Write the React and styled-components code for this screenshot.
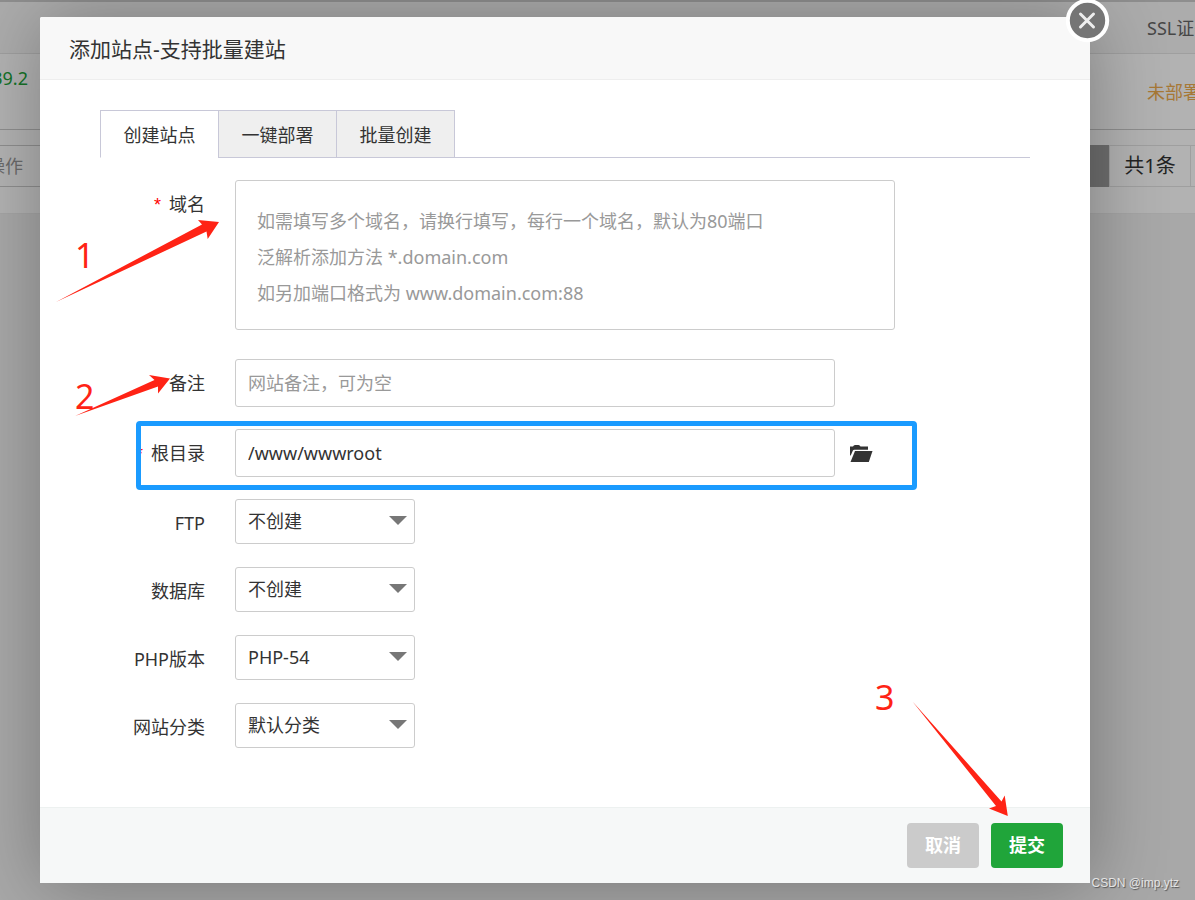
import React from "react";
import styled, { createGlobalStyle } from "styled-components";

const GlobalStyle = createGlobalStyle`
  *, *::before, *::after { box-sizing: border-box; }
  body {
    margin: 0;
    background: #f1f1f1;
    color: #333;
    font-family: "Noto Sans", "Noto Sans CJK SC", sans-serif;
    font-size: 18px;
    line-height: 24px;
  }
  button, input, select, textarea { font: inherit; color: inherit; }
`;

const Screen = styled.div`
  display: grid;
  min-height: 100vh;
  overflow: hidden;
  position: relative;

  > * { grid-area: 1 / 1; min-width: 0; }
`;

/* Site list behind the dialog */
const Backdrop = styled.div`
  background: #f1f1f1;
`;

const Panel = styled.section`
  background: #fff;
  padding-bottom: 26px;
  border-bottom: 1px solid #ececec;
`;

const ListRow = styled.div`
  display: flex;
  justify-content: space-between;
  align-items: center;
  height: ${(p) => p.$height}px;
  background: ${(p) => (p.$head ? "#f6f6f6" : "#fff")};
  border-bottom: 1px solid ${(p) => (p.$head ? "#e4e4e4" : "#ccc")};
  border-top: ${(p) => (p.$head ? "2px solid #ccc" : "0")};
`;

const EdgeText = styled.span`
  display: flex;
  align-self: ${(p) => (p.$end ? "flex-start" : "center")};
  justify-content: ${(p) => (p.$end ? "flex-end" : "flex-start")};
  width: ${(p) => (p.$end ? 28 : 48)}px;
  padding-top: ${(p) => (p.$end ? 12 : 0)}px;
  overflow: hidden;
  white-space: nowrap;
  color: ${(p) => p.$color};
`;

const Pager = styled.div`
  display: flex;
  justify-content: space-between;
  height: 42px;
  margin-top: 15px;
  line-height: 40px;
`;

const BatchCell = styled.div`
  display: flex;
  justify-content: flex-end;
  width: 100px;
  margin-left: -60px;
  padding-right: 17px;
  border: solid #ccc;
  border-width: 1px 0;
  color: #999;
`;

const PageCells = styled.div`
  display: flex;
  font-size: 20px;
`;

const CurrentPage = styled.span`
  width: 40px;
  background: #a0a0a0;
`;

const PageCell = styled.span`
  width: ${(p) => p.$width}px;
  border: 1px solid #e4e4e4;
  border-right: 0;
  text-align: center;
`;

const Scrim = styled.div`
  background: rgba(0, 0, 0, 0.3);
`;

/* Dialog */
const Dialog = styled.section`
  position: relative;
  align-self: start;
  margin: 17px 105px 17px 40px;
  background: #fff;
  border-radius: 2px;
  box-shadow: 2px 2px 75px rgba(0, 0, 0, 0.3);
`;

const Title = styled.h1`
  margin: 0;
  padding: 2px 29px 0;
  border-bottom: 1px solid #eee;
  border-radius: 2px 2px 0 0;
  background: #f8f8f8;
  font-size: 21px;
  font-weight: 400;
  line-height: 60px;
`;

const CloseButton = styled.button`
  position: absolute;
  top: -18px;
  right: -20px;
  width: 44px;
  height: 44px;
  padding: 0;
  border: 0;
  background: none;

  svg { display: block; }
`;

const Content = styled.form`
  padding: 30px 60px 0;
`;

const Tabs = styled.div`
  display: flex;
  height: 48px;
  border-bottom: 1px solid #c8c8d8;
`;

const Tab = styled.button`
  width: 119px;
  height: 48px;
  padding: 2px 0 0;
  border: 1px solid #c8c8d8;
  border-bottom-color: ${(p) => (p.$active ? "#fff" : "#c8c8d8")};
  background: ${(p) => (p.$active ? "#fff" : "#efefef")};
  line-height: 24px;

  & + & { margin-left: -1px; }
`;

const Fields = styled.div`
  display: flex;
  flex-direction: column;
  gap: ${(p) => p.$gap}px;
`;

const Row = styled.div`
  display: flex;
  position: relative;
  min-height: 48px;
`;

const Label = styled.label`
  flex: 0 0 105px;
  margin-right: 30px;
  text-align: right;
  line-height: 48px;
  white-space: nowrap;
`;

const Required = styled.span`
  margin-right: 8px;
  color: #f00;
  font-family: "Liberation Sans", sans-serif;
  line-height: 24px;
`;

const TextInput = styled.input`
  flex: 0 1 600px;
  min-width: 0;
  height: 48px;
  padding: 0 12px;
  border: 1px solid #ccc;
  border-radius: 3px;
  background: #fff;

  &::placeholder { color: #999; opacity: 1; }
`;

const DomainInput = styled.textarea`
  display: block;
  flex: 0 1 660px;
  min-width: 0;
  height: 150px;
  padding: 22px 21px;
  border: 1px solid #ccc;
  border-radius: 3px;
  line-height: 36px;
  resize: none;
  overflow: hidden;

  &::placeholder { color: #999; opacity: 1; }
`;

const SelectBox = styled.div`
  position: relative;
  align-self: flex-start;
  width: 180px;

  &::after {
    content: "";
    position: absolute;
    top: 17px;
    right: 8px;
    border: solid transparent;
    border-width: 9px 9px 0;
    border-top-color: #777;
    pointer-events: none;
  }
`;

const Select = styled.select`
  display: block;
  width: 100%;
  height: 45px;
  padding: 0 12px 2px;
  border: 1px solid #ccc;
  border-radius: 3px;
  background: #fff;
  appearance: none;
`;

const FolderButton = styled.button`
  align-self: center;
  margin-left: 14px;
  padding: 0;
  border: 0;
  background: none;

  svg { display: block; }
`;

const Highlight = styled.div`
  position: absolute;
  inset: -8px 113px -13px 36px;
  border: 5px solid #1a9bff;
  border-radius: 4px;
  pointer-events: none;
`;

const Footer = styled.footer`
  display: flex;
  justify-content: flex-end;
  gap: 12px;
  margin-top: 56px;
  padding: 15px 27px;
  border-top: 1px solid #edf1f0;
  background: #f6f8f8;
`;

const ActionButton = styled.button`
  width: 72px;
  height: 45px;
  padding: 0 0 2px;
  border: 0;
  border-radius: 4px;
  background: ${(p) => (p.$primary ? "#20a53a" : "#cbcbcb")};
  color: #fff;
  font-weight: 700;
`;

/* Hand-drawn marks on top of the dialog */
const Arrows = styled.svg`
  position: absolute;
  top: 0;
  left: 0;
  fill: #ff2315;
  pointer-events: none;
`;

const Step = styled.span`
  position: absolute;
  left: ${(p) => p.$x}px;
  top: ${(p) => p.$y}px;
  color: #ff2315;
  font-size: 34px;
  line-height: 40px;
`;

const Watermark = styled.span`
  position: absolute;
  right: 16px;
  bottom: 9px;
  color: #e4e4e4;
  font-family: "Liberation Sans", sans-serif;
  font-size: 12px;
  line-height: 16px;
  text-shadow: 1px 1px 1px #555;
`;

const selects = [
  { id: "ftp", label: "FTP", value: "不创建" },
  { id: "database", label: "数据库", value: "不创建" },
  { id: "php", label: "PHP版本", value: "PHP-54" },
  { id: "category", label: "网站分类", value: "默认分类" },
];

const domainHint = [
  "如需填写多个域名，请换行填写，每行一个域名，默认为80端口",
  "泛解析添加方法 *.domain.com",
  "如另加端口格式为 www.domain.com:88",
].join("\n");

function SiteList() {
  return (
    <Backdrop>
      <Panel>
        <ListRow $head $height={54}>
          <span />
          <EdgeText $color="#666">SSL证书</EdgeText>
        </ListRow>
        <ListRow $height={76}>
          <EdgeText $end $color="#20a53a">39.2</EdgeText>
          <EdgeText $color="#f0ad4e">未部署</EdgeText>
        </ListRow>
        <Pager>
          <BatchCell>操作</BatchCell>
          <PageCells>
            <CurrentPage />
            <PageCell $width={81}>共1条</PageCell>
            <PageCell $width={5} />
          </PageCells>
        </Pager>
      </Panel>
    </Backdrop>
  );
}

export default function App() {
  return (
    <>
      <GlobalStyle />
      <Screen>
        <SiteList />
        <Scrim />
        <Dialog role="dialog" aria-labelledby="dialog-title">
          <Title id="dialog-title">添加站点-支持批量建站</Title>
          <Content id="site-form">
            <Tabs role="tablist">
              <Tab type="button" role="tab" aria-selected="true" $active>创建站点</Tab>
              <Tab type="button" role="tab">一键部署</Tab>
              <Tab type="button" role="tab">批量创建</Tab>
            </Tabs>
            <Fields $gap={22}>
              <span />
              <Fields $gap={29}>
                <Row>
                  <Label htmlFor="domain"><Required>*</Required>域名</Label>
                  <DomainInput id="domain" placeholder={domainHint} />
                </Row>
                <Row>
                  <Label htmlFor="note">备注</Label>
                  <TextInput id="note" placeholder="网站备注，可为空" />
                </Row>
              </Fields>
              <Row>
                <Label htmlFor="root-dir"><Required>*</Required>根目录</Label>
                <TextInput id="root-dir" defaultValue="/www/wwwroot" />
                <FolderButton type="button" aria-label="选择目录">
                  <svg width="24" height="18" viewBox="0 0 24 18" fill="#333">
                    <path d="M1 10.500V2.500h3q.6-1.500 2-1.500h3.500q1.400 0 2 1.500H19V5.700H5.300q-1 0-1.400.9L1.500 12z" />
                    <path d="M6 7h17.500L19.800 18H1.500z" />
                  </svg>
                </FolderButton>
                <Highlight />
              </Row>
              <Fields $gap={20}>
                {selects.map((s) => (
                  <Row key={s.id}>
                    <Label htmlFor={s.id}>{s.label}</Label>
                    <SelectBox>
                      <Select id={s.id}>
                        <option>{s.value}</option>
                      </Select>
                    </SelectBox>
                  </Row>
                ))}
              </Fields>
            </Fields>
          </Content>
          <Footer>
            <ActionButton type="button">取消</ActionButton>
            <ActionButton type="submit" form="site-form" $primary>提交</ActionButton>
          </Footer>
          <CloseButton type="button" aria-label="关闭">
            <svg width="44" height="44" viewBox="0 0 44 44">
              <circle cx="21.500" cy="21.500" r="19.700" fill="#757575" stroke="#fff" strokeWidth="4" />
              <path d="M14.500 15l13 13M27.500 15l-13 13" stroke="#eee" strokeWidth="3" strokeLinecap="round" />
            </svg>
          </CloseButton>
        </Dialog>
        <Arrows width="1195" height="900" viewBox="0 0 1195 900" aria-hidden="true">
          <path d="M56 302L202 224.500 198 220 219 222 207.700 239 206.500 231.500z" />
          <path d="M75 416L154.500 380 149 375 170 378.500 158 393.500 158 386.500z" />
          <path d="M912.500 701.500L1001.500 801.500 1004.700 795.500 1007.800 816 989 808.500 996 806z" />
        </Arrows>
        <Step $x={75} $y={235}>1</Step>
        <Step $x={75} $y={376}>2</Step>
        <Step $x={875} $y={677}>3</Step>
        <Watermark>CSDN @imp.ytz</Watermark>
      </Screen>
    </>
  );
}
